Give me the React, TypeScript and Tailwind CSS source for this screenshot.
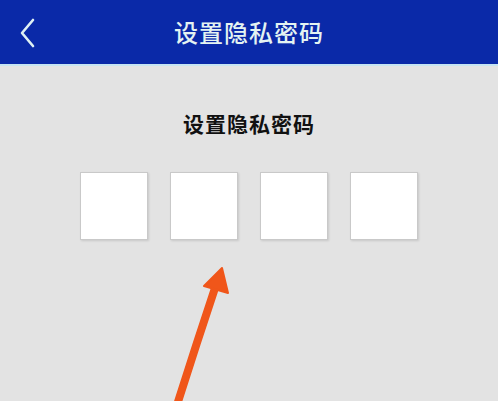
export default function App() {
  return (
    <div
      className="w-[498px] h-[401px] overflow-hidden bg-[#e3e3e3] relative"
      style={{ fontFamily: '"Noto Sans CJK SC", "Noto Sans", sans-serif' }}
    >
      {/* Top bar */}
      <div className="h-[66px] bg-[#0a29a8] flex items-center relative border-b-2 border-[#c6e4f2]">
        <svg
          className="absolute left-[18px] top-[18px]"
          width="18"
          height="30"
          viewBox="0 0 18 30"
          fill="none"
        >
          <path
            d="M15 2 L4 15 L15 28"
            stroke="#dff1f4"
            strokeWidth="2.6"
            strokeLinecap="round"
            strokeLinejoin="round"
          />
        </svg>
        <h1 className="w-full text-center text-[24px] text-[#e4f3f2] tracking-[1px] font-medium">
          设置隐私密码
        </h1>
      </div>

      {/* Body */}
      <div className="flex flex-col items-center pt-[42px]">
        <h2 className="text-[21px] font-bold text-[#111] tracking-[1px] leading-[30px]">
          设置隐私密码
        </h2>
        <div className="flex gap-[22px] mt-[34px]">
          <Box />
          <Box />
          <Box />
          <Box />
        </div>
      </div>

      {/* Pointer arrow */}
      <svg
        className="absolute left-0 top-0 pointer-events-none"
        width="498"
        height="401"
        viewBox="0 0 498 401"
      >
        <path
          d="M177 405 Q196 345 216 285"
          stroke="#f0561a"
          strokeWidth="8"
          fill="none"
          strokeLinecap="round"
        />
        <path d="M222 268 L204 286 L228 293 Z" fill="#f0561a" stroke="#f0561a" strokeWidth="2" strokeLinejoin="round" />
      </svg>
    </div>
  );
}

function Box() {
  return (
    <div className="w-[68px] h-[68px] bg-white border border-[#c9c9c9] shadow-[1px_1px_2px_rgba(0,0,0,0.12)]" />
  );
}
